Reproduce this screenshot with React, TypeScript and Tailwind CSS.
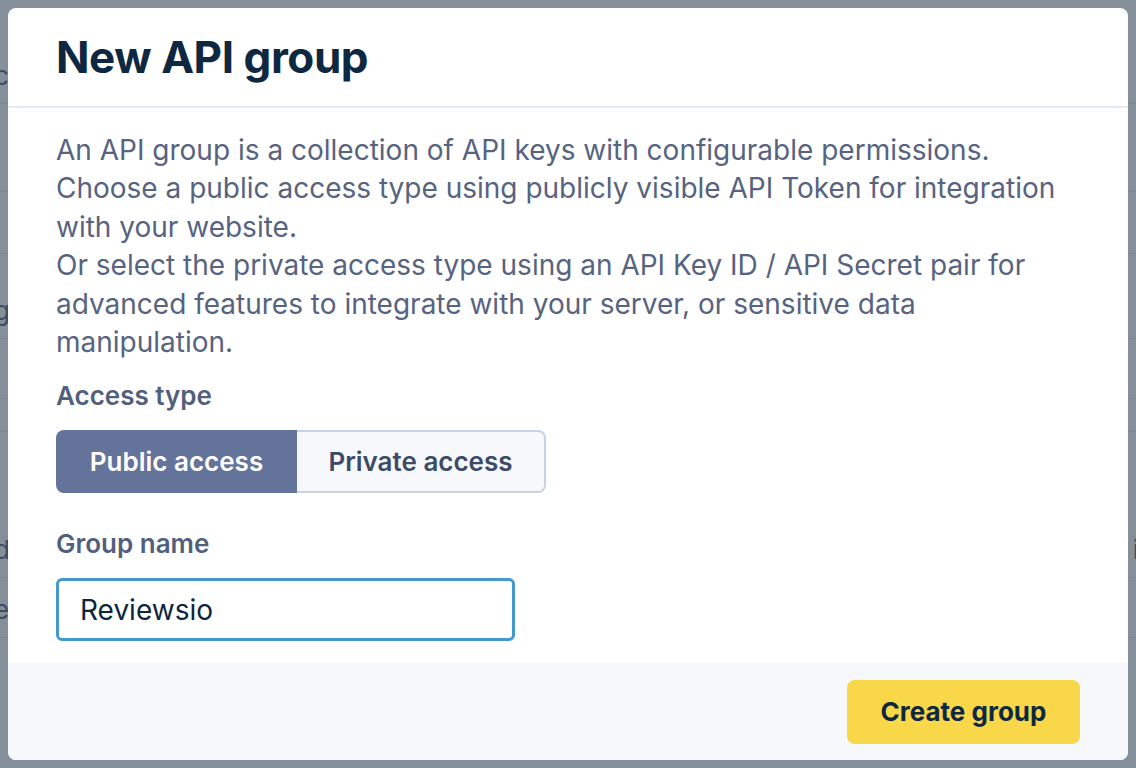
import React from 'react';

// Faint rows of the page that sits under the dimmed overlay
const backgroundRows = [
  { h: 'h-[104px]', left: 'c', right: '' },
  { h: 'h-[88px]', left: '.', right: '' },
  { h: 'h-[62px]', left: '', right: '' },
  { h: 'h-[85px]', left: 'g', right: '' },
  { h: 'h-[60px]', left: '', right: '' },
  { h: 'h-[33px]', left: '', right: '' },
  { h: 'h-[146px]', left: 'd', right: 'i' },
  { h: 'h-[60px]', left: 'e', right: '' },
];

function BackgroundPage() {
  return (
    <div className="flex h-[768px] flex-col overflow-hidden bg-[#858f9a]">
      {backgroundRows.map((row, i) => (
        <div
          key={i}
          className={`${row.h} flex shrink-0 items-end justify-between border-b border-[#7a8494] pb-2 text-[26px] text-[#3f4b61]`}
        >
          <span className="-ml-[6px]">{row.left}</span>
          <span className="-mr-[3px]">{row.right}</span>
        </div>
      ))}
      <div className="shrink-0 whitespace-nowrap pl-[20px] pt-[78px] text-[26px] leading-[36px] text-[#3f4b61]">
        ad for API authentication and permissions of your API calls
      </div>
    </div>
  );
}

function AccessToggle() {
  const [type, setType] = React.useState<'public' | 'private'>('public');
  return (
    <div className="flex h-[63px] w-fit">
      <button
        type="button"
        onClick={() => setType('public')}
        className={
          type === 'public'
            ? 'w-[241px] rounded-l-lg bg-[#64739a] text-[26px] font-semibold text-white'
            : 'w-[241px] rounded-l-lg border-2 border-r-0 border-[#c8d2e3] bg-[#f6f8fc] text-[26px] font-semibold text-[#3d4a66]'
        }
      >
        Public access
      </button>
      <button
        type="button"
        onClick={() => setType('private')}
        className={
          type === 'private'
            ? 'w-[249px] rounded-r-lg bg-[#64739a] text-[26px] font-semibold text-white'
            : 'w-[249px] rounded-r-lg border-2 border-l-0 border-[#c8d2e3] bg-[#f6f8fc] text-[26px] font-semibold text-[#3d4a66]'
        }
      >
        Private access
      </button>
    </div>
  );
}

export default function App() {
  const [name, setName] = React.useState('Reviewsio');

  return (
    <div className="relative h-[768px] w-full overflow-hidden font-['Inter',sans-serif]">
      <BackgroundPage />

      {/* Modal */}
      <div className="absolute inset-2 flex flex-col overflow-hidden rounded-lg bg-white">
        <div className="border-b-2 border-[#e3ebf6] px-12 pb-[25px] pt-[25px]">
          <h1 className="text-[44px] font-bold leading-[48px] tracking-[-0.01em] text-[#0f2841]">New API group</h1>
        </div>

        <div className="flex flex-1 flex-col px-12 pt-[23px]">
          <p className="text-[28px] leading-[38.4px] text-[#57637f]">
            An API group is a collection of API keys with configurable permissions.
            <br />
            Choose a public access type using publicly visible API Token for integration with your website.
            <br />
            Or select the private access type using an API Key ID / API Secret pair for advanced features to integrate with your server, or sensitive data manipulation.
          </p>

          <label className="mb-[16px] mt-[17px] text-[26px] font-semibold leading-[36px] text-[#525f7c]">
            Access type
          </label>
          <AccessToggle />

          <label className="mb-[16px] mt-[33px] text-[26px] font-semibold leading-[36px] text-[#525f7c]">
            Group name
          </label>
          <input
            value={name}
            onChange={(e) => setName(e.target.value)}
            className="h-[63px] w-[459px] rounded-md border-[3px] border-[#4498cc] px-[21px] text-[28px] text-[#0d2640] outline-none"
          />
        </div>

        <div className="flex h-[97px] items-center justify-end bg-[#f6f8fc] px-12">
          <button
            type="button"
            className="h-[64px] w-[233px] rounded-lg bg-[#f8d748] text-[26px] font-bold text-[#0f2841]"
          >
            Create group
          </button>
        </div>
      </div>
    </div>
  );
}
